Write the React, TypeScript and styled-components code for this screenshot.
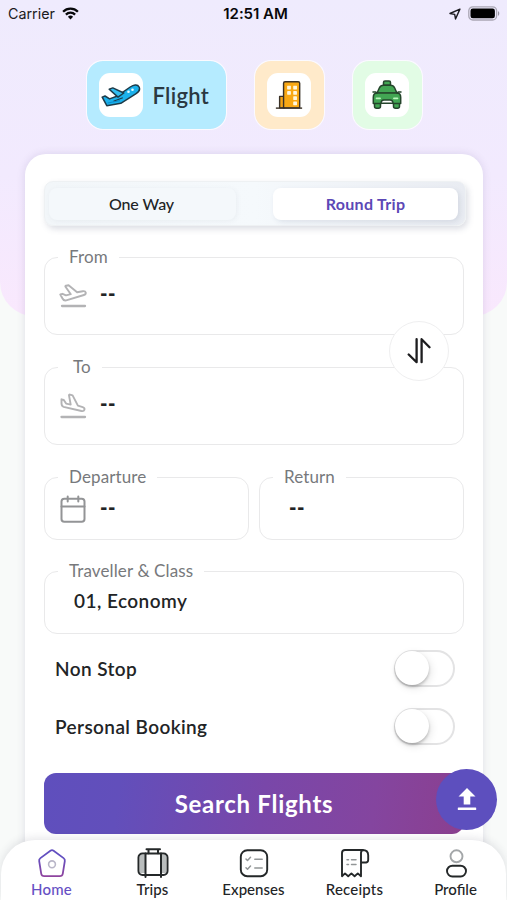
import React from 'react';
import styled, { createGlobalStyle, css } from 'styled-components';

const GlobalStyle = createGlobalStyle`
  * { box-sizing: border-box; }
  body { margin: 0; font-family: Lato, "Open Sans", sans-serif; color: #222426; }
  button { font: inherit; color: inherit; border: 0; padding: 0; background: none; }
`;

const Screen = styled.div`
  position: relative;
  width: 507px;
  height: 900px;
  overflow: hidden;
  background: #f8faf9;
`;

const Backdrop = styled.div`
  position: absolute;
  inset: 0 0 auto;
  height: 316px;
  border-radius: 0 0 34px 34px;
  background: linear-gradient(180deg, #efebfd 0%, #f2eafe 55%, #f9e8fd 100%);
`;

const Content = styled.main`
  position: relative;
  display: flex;
  flex-direction: column;
`;

const StatusBar = styled.header`
  display: grid;
  grid-template-columns: 1fr auto 1fr;
  align-items: center;
  height: 27px;
  padding: 0 7px 0 8px;
  font-family: Inter, sans-serif;
  font-size: 14.3px;
  color: #1b1a20;
`;

const StatusGroup = styled.div<{ $end?: boolean }>`
  display: flex;
  align-items: center;
  gap: 7px;
  ${p => p.$end && css`justify-content: flex-end;`}
`;

const Clock = styled.time`
  font-weight: 600;
  font-size: 15px;
  letter-spacing: -0.05px;
  color: #08080a;
  padding-left: 3px;
`;

const Tiles = styled.nav`
  display: flex;
  justify-content: center;
  gap: 27px;
  padding: 33px 0 0 1px;
`;

const Tile = styled.button<{ $bg: string; $wide?: boolean }>`
  display: flex;
  align-items: center;
  justify-content: ${p => (p.$wide ? 'flex-start' : 'center')};
  gap: 10px;
  width: ${p => (p.$wide ? 141 : 71)}px;
  height: 70px;
  padding-left: ${p => (p.$wide ? 12 : 0)}px;
  border: 1px solid rgba(255, 255, 255, 0.75);
  border-radius: 17px;
  background: ${p => p.$bg};
  background-clip: padding-box;
`;

const TileIcon = styled.span`
  display: grid;
  place-items: center;
  width: 44px;
  height: 44px;
  border-radius: 11px;
  background: #fff;
`;

const TileLabel = styled.span`
  font-size: 22px;
  font-weight: 600;
  letter-spacing: 0.3px;
  color: #2b3942;
`;

const Card = styled.section`
  display: flex;
  flex-direction: column;
  width: 458px;
  height: 760px;
  margin: 24px 0 0 25px;
  padding: 27px 16px 0 19px;
  border-radius: 21px;
  background: #fff;
  box-shadow: 0 0 9px rgba(60, 50, 110, 0.13);
`;

const Segmented = styled.div`
  display: flex;
  justify-content: space-between;
  width: 422px;
  height: 45px;
  padding: 6px 7px 6px 4px;
  border: 1px solid #eef1f3;
  border-radius: 9px;
  background: linear-gradient(90deg, #f2f6f9 0%, #f5f9fc 50%, #e9ecf2 100%);
  box-shadow: 2px 3px 6px rgba(80, 90, 120, 0.2);
`;

const Segment = styled.button<{ $active?: boolean }>`
  width: ${p => (p.$active ? 185 : 187)}px;
  height: 32px;
  border-radius: 8px;
  font-size: 16px;
  line-height: 32px;
  ${p => p.$active
    ? css`background: #fff; color: #5c48b6; font-weight: 700; letter-spacing: 0.3px; box-shadow: 2px 2px 5px rgba(80, 90, 120, 0.13);`
    : css`background: #f4f8fb; font-weight: 500; letter-spacing: -0.08px; padding-right: 2px; box-shadow: 1px 1px 5px rgba(80, 100, 120, 0.07);`}
`;

const Fields = styled.div`
  position: relative;
  display: flex;
  flex-direction: column;
  gap: 22px;
  width: 420px;
  margin-top: 21px;
`;

const FieldPair = styled.div`
  display: grid;
  grid-template-columns: 205px 205px;
  justify-content: space-between;
  margin-bottom: -1px;
`;

const FieldBox = styled.fieldset<{ $tall?: boolean }>`
  display: flex;
  min-width: 0;
  height: ${p => (p.$tall ? 88 : 73)}px;
  margin: 0;
  padding: 0 13px;
  border: 1.5px solid #e9e9ea;
  border-radius: 13px;
`;

const Legend = styled.legend<{ $inset?: number }>`
  height: 20px;
  padding: 0 11px 0 ${p => p.$inset ?? 11}px;
  font-size: 17px;
  line-height: 19px;
  letter-spacing: 0.12px;
  color: #77797c;
`;

const FieldBody = styled.div<{ $tall?: boolean; $plain?: boolean }>`
  display: flex;
  align-items: center;
  gap: 13px;
  height: ${p => (p.$tall ? 58 : 43)}px;
  padding-left: ${p => (p.$plain ? 16 : 1)}px;
  svg { flex: none; }
`;

const Value = styled.span<{ $lift?: number }>`
  font-size: 19px;
  font-weight: 600;
  letter-spacing: 0.45px;
  margin-top: ${p => -(p.$lift ?? 0)}px;
`;

const Dashes = styled(Value)`
  font-size: 20px;
  font-weight: 800;
  letter-spacing: 0.4px;
`;

const SwapButton = styled.button`
  position: absolute;
  right: 15px;
  top: 74px;
  display: grid;
  place-items: center;
  width: 60px;
  height: 60px;
  border: 1.5px solid #efeff0;
  border-radius: 50%;
  background: #fff;
`;

const Options = styled.div`
  display: flex;
  flex-direction: column;
  gap: 21px;
  padding: 16px 12px 0 11px;
`;

const Option = styled.label`
  display: flex;
  align-items: center;
  justify-content: space-between;
  height: 37px;
  font-size: 19px;
  font-weight: 600;
  letter-spacing: 0.4px;
  line-height: 36px;
`;

const Switch = styled.span`
  display: flex;
  width: 61px;
  height: 37px;
  border: 2px solid #e3e3e4;
  border-radius: 19px;
  &::before {
    content: '';
    width: 34px;
    height: 34px;
    margin: -1px 0 0 -1px;
    border-radius: 50%;
    background: #fff;
    box-shadow: 0 2px 3px rgba(0, 0, 0, 0.22), 2px 3px 8px rgba(0, 0, 0, 0.1);
  }
`;

const SearchButton = styled.button`
  width: 420px;
  height: 61px;
  margin-top: 28px;
  border-radius: 12px;
  background: linear-gradient(98deg, #5f4fbd 0%, #624fbb 18%, #7947a9 52%, #84459f 78%, #8b3f8f 100%);
  color: #fff;
  font-size: 24px;
  font-weight: 700;
  letter-spacing: 0.72px;
`;

const UploadButton = styled.button`
  position: absolute;
  left: 436px;
  top: 769px;
  display: grid;
  place-items: center;
  width: 61px;
  height: 61px;
  border-radius: 50%;
  background: #5d4fbe;
`;

const TabBar = styled.nav`
  position: absolute;
  left: 1px;
  right: 1px;
  bottom: 0;
  display: grid;
  grid-template-columns: repeat(5, 101px);
  height: 60px;
  border-radius: 34px 34px 0 0;
  background: #fff;
  box-shadow: 0 -2px 9px rgba(50, 50, 70, 0.12);
`;

const Tab = styled.a<{ $active?: boolean; $spacing: number }>`
  display: flex;
  flex-direction: column;
  align-items: center;
  padding-top: 7px;
  font-size: 15px;
  font-weight: 500;
  line-height: 18px;
  letter-spacing: ${p => p.$spacing}px;
  color: ${p => (p.$active ? '#6650c4' : '#222426')};
`;

const WifiIcon = () => (
  <svg width="17" height="13" viewBox="0 0 17 13" fill="none" stroke="#08080a" strokeWidth="2.3">
    <path d="M1.1 4.7a10.5 10.5 0 0 1 14.8 0" />
    <path d="M3.9 7.6a6.5 6.5 0 0 1 9.2 0" />
    <path d="M8.5 12.4 5.9 9.7a3.8 3.8 0 0 1 5.2 0z" fill="#08080a" stroke="none" />
  </svg>
);

const LocationIcon = () => (
  <svg width="12" height="12" viewBox="0 0 12 12" fill="none" stroke="#1b1a20" strokeWidth="1.4" strokeLinejoin="round">
    <path d="M10.9 1.1 1 5.5l4.7.9.8 4.6z" />
  </svg>
);

const BatteryIcon = () => (
  <svg width="32" height="15" viewBox="0 0 32 15">
    <rect x=".8" y=".8" width="27.8" height="13.2" rx="4" fill="none" stroke="#aaa7b4" strokeWidth="1.3" />
    <rect x="2.5" y="2.5" width="24.4" height="9.8" rx="2.3" fill="#000" />
    <path d="M30 5.2c1.7.5 1.7 4 0 4.5z" fill="#9895a2" />
  </svg>
);

const PlaneIcon = () => (
  <svg width="40" height="26" viewBox="0 0 40 26" stroke="#1d3b49" strokeWidth="1.5" strokeLinejoin="round">
    <path d="M1.2 15.1 4 14l4.6 2.9 7.2-2.6 13.4-9.300C32.200 3 36.500 1.700 38.100 5c1.200 2.600-.4 5-3 6.600L19.800 21.300 5.800 23.700z" fill="#1bb1ec" />
    <path d="m8.200 7.200 3.600-1.300L22.800 11l-5.800 4.100z" fill="#31bef2" />
    <path d="m12.500 19.200 9.300-3.400" fill="none" strokeWidth="1.200" />
    <path d="M6.600 21 19 18.600" stroke="#078bcd" fill="none" strokeWidth="1" />
    <circle cx="27.500" cy="9.800" r="1.300" fill="#e8fbff" stroke="none" />
    <circle cx="31.500" cy="7.700" r="1.300" fill="#e8fbff" stroke="none" />
  </svg>
);

const BuildingIcon = () => (
  <svg width="30" height="30" viewBox="0 0 30 32" stroke="#3a3127" strokeWidth="1.5" strokeLinejoin="round">
    <rect x="5" y="17.5" width="5" height="12.2" fill="#f5a316" />
    <path d="M9.2 29.7V3.4q0-1.600 1.600-1.600h14q1.600 0 1.600 1.600v26.300z" fill="#f9a814" />
    <path d="M1 30h28" />
    <g fill="#fff7df" stroke="none">
      <rect x="13" y="6" width="4" height="4" rx=".5" /><rect x="19.5" y="6" width="4" height="4" rx=".5" />
      <rect x="13" y="11.8" width="4" height="4" rx=".5" /><rect x="19.5" y="11.8" width="4" height="4" rx=".5" />
      <rect x="19.5" y="17.4" width="4" height="4" rx=".5" /><rect x="19.5" y="23" width="4" height="4" rx=".5" />
    </g>
  </svg>
);

const TaxiIcon = () => (
  <svg width="30" height="30" viewBox="0 0 30 30" fill="#42a653" stroke="#24442b" strokeWidth="1.5" strokeLinejoin="round" strokeLinecap="round">
    <path d="M11.5 5.2V2.600q0-1.500 1.500-1.500h4q1.500 0 1.500 1.500v2.600z" />
    <path d="M2.500 22.500h6v3.800q0 2-2 2h-2q-2 0-2-2zM21.500 22.500h6v3.800q0 2-2 2h-2q-2 0-2-2z" />
    <path d="M5 13.200 7.300 8Q8.600 5.200 11.500 5.200h7q2.900 0 4.200 2.800L25 13.200z" />
    <path d="M1.300 17.300q0-4.200 4.100-4.200h19.200q4.100 0 4.100 4.200v6.200H21q0-3.600-3-3.600h-6q-3 0-3 3.600H1.300z" />
    <path d="M1 11.900h2.800l1.100 1.300M29 11.900h-2.800l-1.100 1.300M9.500 23.300h11" fill="none" />
    <path d="M4.500 18.300h3.600M21.900 18.300h3.600" stroke="#b9f7bd" strokeWidth="1.700" />
  </svg>
);

const TakeoffIcon = () => (
  <svg width="28" height="24" viewBox="0 0 28 24" fill="none" stroke="#b3b3b5" strokeWidth="1.9" strokeLinejoin="round" strokeLinecap="round">
    <path d="M1.300 10.500 3.500 9.800 7 11.400l4.800-1.200-5.300-7.400q-.4-.8.5-1.100l2.600-.5 8.500 7 5.700-1c3.300-.6 4.100 2.900 1.100 3.800L7.200 16.400c-2 .5-3-.5-3.700-1.900z" />
    <path d="M3 22h23" strokeWidth="2.3" />
  </svg>
);

const LandingIcon = () => (
  <svg width="28" height="26" viewBox="0 0 28 26" fill="none" stroke="#b3b3b5" strokeWidth="1.9" strokeLinejoin="round" strokeLinecap="round">
    <path d="m2.500 6.300 2.300.7 2.300 3.600 4.600 1L10 2.300q0-.9.900-.7l2.700.8 5.300 10.200 4.800 1.500c3 1.100 2 4.500-1.200 3.900L4.600 13.800c-2-.6-2.100-1.800-2.100-3.500z" />
    <path d="M2.500 24h23.500" strokeWidth="2.300" />
  </svg>
);

const CalendarIcon = () => (
  <svg width="28" height="28" viewBox="0 0 28 28" fill="none" stroke="#939496" strokeWidth="2" strokeLinecap="round">
    <rect x="2.500" y="3.800" width="23" height="23" rx="2.800" />
    <path d="M2.500 11.500h23M8.700 1.400v5M19.300 1.400v5" />
  </svg>
);

const SwapIcon = () => (
  <svg width="24" height="26" viewBox="0 0 24 26" fill="none" stroke="#1d1d1f" strokeWidth="2.300" strokeLinecap="round" strokeLinejoin="round">
    <path d="M9.600 1.200v23L1.700 16.500M14.600 24.200v-23l7.900 8" />
  </svg>
);

const UploadIcon = () => (
  <svg width="20" height="23" viewBox="0 0 20 23" fill="#fff">
    <path d="M10 0 18.500 8.600h-5.200v8H6.700v-8H1.500z" />
    <rect x=".8" y="19.500" width="18.400" height="2.600" rx=".6" />
  </svg>
);

const HomeIcon = () => (
  <svg width="30" height="33" viewBox="0 0 30 33" fill="none">
    <defs>
      <linearGradient id="home-outline" x1="0" y1="0" x2="0" y2="1">
        <stop offset=".3" stopColor="#624fc0" />
        <stop offset="1" stopColor="#8f449e" />
      </linearGradient>
    </defs>
    <path d="M13.400 3.700q1.600-1 3.200 0l10 7.400q1.600 1.200 1.200 3l-2 12.500q-.5 2.600-3 2.600H7.200q-2.500 0-3-2.600l-2-12.500q-.4-1.800 1.200-3z" stroke="url(#home-outline)" strokeWidth="1.800" />
    <circle cx="15" cy="17.300" r="3.400" stroke="#b9b6c8" strokeWidth="1.600" />
  </svg>
);

const TripsIcon = () => (
  <svg width="32" height="33" viewBox="0 0 32 33" fill="none" stroke="#242829" strokeWidth="2" strokeLinecap="round">
    <path d="M3 8h5v18H3zM24.500 8H29v18h-4.500z" fill="#b9bdbd" stroke="none" />
    <rect x="1.500" y="6.500" width="29" height="21.500" rx="4" />
    <path d="M8.500 6.500V30M24 6.500V30M9.500 2.200h13.500M11.500 2.200v4M21 2.200v4" />
  </svg>
);

const ExpensesIcon = () => (
  <svg width="30" height="33" viewBox="0 0 30 33" fill="none" stroke="#242829" strokeWidth="1.900" strokeLinecap="round" strokeLinejoin="round">
    <rect x="1.800" y="3.200" width="26.400" height="26" rx="6.500" />
    <g stroke="#929697" strokeWidth="1.500">
      <path d="m7 12 1.500 1.500 3-3.200M15.800 12.200h7.400M7 20.800l1.500 1.500 3-3.200M15.800 21h7.400" />
    </g>
  </svg>
);

const ReceiptsIcon = () => (
  <svg width="30" height="33" viewBox="0 0 30 33" fill="none" stroke="#242829" strokeWidth="1.900" strokeLinejoin="round" strokeLinecap="round">
    <path d="M21 15.500V29.200l-3.200-2.800-3.200 2.800-3.200-2.800-3.200 2.800L5 26.400l-3 2.800V6q0-3 3-3h17.500q5.700 0 5.700 5.200v4.900q0 2-2 2.400H21V6q0-2.600 2-3" />
    <path d="M7 12.800h1.500M11.500 12.800h4.500M7 17.600h1.500M11.500 17.600h4.500" stroke="#929697" strokeWidth="1.500" />
  </svg>
);

const ProfileIcon = () => (
  <svg width="24" height="33" viewBox="0 0 24 33" fill="none" strokeWidth="1.900">
    <circle cx="12.500" cy="9.300" r="6" stroke="#a3a6a8" />
    <rect x="3" y="18.700" width="19" height="10.800" rx="5.400" stroke="#242829" />
  </svg>
);

interface FieldProps {
  label: string;
  value: string;
  icon?: React.ReactNode;
  tall?: boolean;
  inset?: number;
}

function Field({ label, value, icon, tall, inset }: FieldProps) {
  const empty = value === '--';
  return (
    <FieldBox $tall={tall}>
      <Legend $inset={inset}>{label}</Legend>
      <FieldBody $tall={tall} $plain={!icon}>
        {icon}
        {empty ? <Dashes $lift={tall ? 6 : 3}>--</Dashes> : <Value $lift={4}>{value}</Value>}
      </FieldBody>
    </FieldBox>
  );
}

const tabs = [
  { name: 'Home', icon: <HomeIcon />, spacing: 0.2 },
  { name: 'Trips', icon: <TripsIcon />, spacing: 0.1 },
  { name: 'Expenses', icon: <ExpensesIcon />, spacing: 0.05 },
  { name: 'Receipts', icon: <ReceiptsIcon />, spacing: 0.2 },
  { name: 'Profile', icon: <ProfileIcon />, spacing: 0 },
];

export default function App() {
  return (
    <Screen>
      <GlobalStyle />
      <Backdrop />
      <Content>
        <StatusBar>
          <StatusGroup><span>Carrier</span><WifiIcon /></StatusGroup>
          <Clock>12:51 AM</Clock>
          <StatusGroup $end><LocationIcon /><BatteryIcon /></StatusGroup>
        </StatusBar>

        <Tiles>
          <Tile $bg="#b5ebff" $wide>
            <TileIcon><PlaneIcon /></TileIcon>
            <TileLabel>Flight</TileLabel>
          </Tile>
          <Tile $bg="#ffeaca" aria-label="Hotel"><TileIcon><BuildingIcon /></TileIcon></Tile>
          <Tile $bg="#e2fce5" aria-label="Taxi"><TileIcon><TaxiIcon /></TileIcon></Tile>
        </Tiles>

        <Card>
          <Segmented>
            <Segment>One Way</Segment>
            <Segment $active>Round Trip</Segment>
          </Segmented>

          <Fields>
            <Field label="From" value="--" icon={<TakeoffIcon />} tall />
            <Field label="To" value="--" icon={<LandingIcon />} tall inset={15} />
            <FieldPair>
              <Field label="Departure" value="--" icon={<CalendarIcon />} />
              <Field label="Return" value="--" />
            </FieldPair>
            <Field label="Traveller &amp; Class" value="01, Economy" />
            <SwapButton aria-label="Swap"><SwapIcon /></SwapButton>
          </Fields>

          <Options>
            <Option>Non Stop<Switch /></Option>
            <Option>Personal Booking<Switch /></Option>
          </Options>

          <SearchButton>Search Flights</SearchButton>
        </Card>
      </Content>

      <TabBar>
        {tabs.map((tab, i) => (
          <Tab key={tab.name} $active={i === 0} $spacing={tab.spacing}>
            {tab.icon}
            {tab.name}
          </Tab>
        ))}
      </TabBar>
      <UploadButton aria-label="Upload"><UploadIcon /></UploadButton>
    </Screen>
  );
}
